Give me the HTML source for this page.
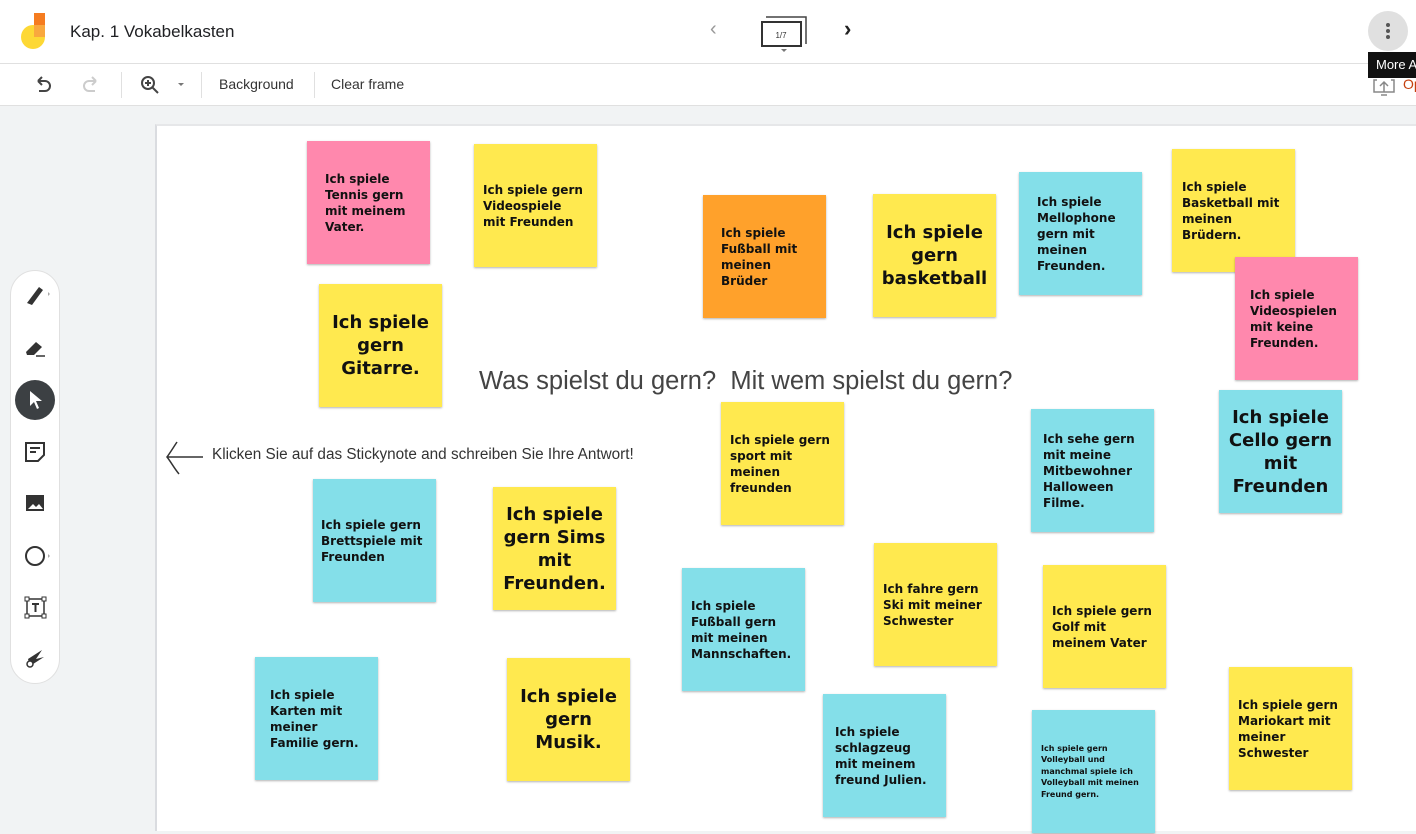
<!DOCTYPE html>
<html><head><meta charset="utf-8"><style>
*{margin:0;padding:0;box-sizing:border-box}
body{width:1416px;height:834px;overflow:hidden;background:#f1f3f4;font-family:"Liberation Sans",Arial,sans-serif;position:relative}
.hdr{position:absolute;left:0;top:0;width:1416px;height:64px;background:#fff;border-bottom:1px solid #e0e0e0}
.tb{position:absolute;left:0;top:64px;width:1416px;height:42px;background:#fff;border-bottom:1px solid #e0e0e0}
.canvas{position:absolute;left:155px;top:124px;width:1261px;height:707px;background:#fff;border-left:2px solid #dadce0;border-top:2px solid #e6e7e9}
.n{position:absolute;width:123px;height:123px;display:flex;align-items:center;padding:0 10px 0 18px;font-family:"DejaVu Sans",sans-serif;font-weight:bold;font-size:12px;line-height:16px;color:#111;box-shadow:0 1px 2px rgba(0,0,0,.3)}
.big{font-size:18px;line-height:23px;justify-content:center;text-align:center;padding:0 6px}
.p{background:#ff88ad}.y{background:#ffe94f}.o{background:#ffa12b}.c{background:#84dfe9}
.sep{position:absolute;top:72px;width:1px;height:26px;background:#e0e0e0}
.tool{position:absolute;left:10px;top:270px;width:50px;height:414px;background:#fff;border-radius:25px;border:1px solid #e0e0e0}
</style></head><body>
<div class="hdr">
 <svg style="position:absolute;left:20px;top:12px" width="28" height="38"><circle cx="13" cy="25" r="12" fill="#fdd835"/><rect x="14" y="1" width="11" height="12" fill="#f57c20"/><rect x="14" y="13" width="11" height="12" fill="#f9a83e"/></svg>
 <div style="position:absolute;left:70px;top:22px;font-size:17px;color:#202124">Kap. 1 Vokabelkasten</div>
 <div style="position:absolute;left:710px;top:18px;font-size:20px;color:#999">‹</div>
 <svg style="position:absolute;left:758px;top:14px" width="52" height="40"><path d="M8 3H48V30" fill="none" stroke="#444" stroke-width="1.5"/><rect x="4" y="8" width="39" height="24" fill="#fff" stroke="#333" stroke-width="2"/><text x="23" y="24" font-size="8" text-anchor="middle" font-family="Liberation Sans" fill="#333">1/7</text><path d="M23 35l3 3 3-3z" fill="#777"/></svg>
 <div style="position:absolute;left:844px;top:16px;font-size:22px;font-weight:bold;color:#222">›</div>
 <div style="position:absolute;left:1368px;top:11px;width:40px;height:40px;border-radius:50%;background:#e0e0e0"></div>
 <svg style="position:absolute;left:1384px;top:22px" width="8" height="18"><circle cx="4" cy="3" r="2" fill="#555"/><circle cx="4" cy="9" r="2" fill="#555"/><circle cx="4" cy="15" r="2" fill="#555"/></svg>
</div>
<div class="tb">
 <svg style="position:absolute;left:34px;top:12px" width="18" height="18"><path d="M4 5H11A5 5 0 0 1 11 15H5M4 5L8 1M4 5L8 9" fill="none" stroke="#444" stroke-width="2"/></svg>
 <svg style="position:absolute;left:82px;top:12px" width="18" height="18"><path d="M14 5H7A5 5 0 0 0 7 15H13M14 5L10 1M14 5L10 9" fill="none" stroke="#ccc" stroke-width="2"/></svg>
 <svg style="position:absolute;left:140px;top:11px" width="20" height="20"><circle cx="8" cy="8" r="6" fill="none" stroke="#444" stroke-width="2"/><path d="M12 12L18 18M5 8H11M8 5V11" stroke="#444" stroke-width="2"/></svg>
 <div style="position:absolute;left:178px;top:19px;border:3px solid transparent;border-top:3px solid #777"></div>
 <div style="position:absolute;left:219px;top:12px;font-size:14px;color:#333">Background</div>
 <div style="position:absolute;left:331px;top:12px;font-size:14px;color:#333">Clear frame</div>
 <svg style="position:absolute;left:1373px;top:12px" width="22" height="20"><path d="M4 4H1V16H21V4H18M11 16V6M7 10L11 6L15 10M8 19H14" fill="none" stroke="#888" stroke-width="1.5"/></svg>
 <div style="position:absolute;left:1403px;top:12px;font-size:14px;color:#c5400f">Op</div>
</div>
<div class="sep" style="left:121px"></div><div class="sep" style="left:201px"></div><div class="sep" style="left:314px"></div>
<div style="position:absolute;left:1368px;top:52px;width:48px;height:26px;background:#111;color:#fff;font-size:13px;padding:5px 0 0 8px;white-space:nowrap;overflow:hidden">More A</div>
<div class="canvas">
 <div style="position:absolute;left:322px;top:241px;font-size:25.5px;color:#444;white-space:pre;font-family:'Liberation Sans',sans-serif">Was spielst du gern?  Mit wem spielst du gern?</div>
 <svg style="position:absolute;left:6px;top:314px" width="42" height="36"><path d="M40 17H4M14 2C10 8 7 13 4 17C8 22 11 28 16 34" fill="none" stroke="#333" stroke-width="1.5"/></svg>
 <div style="position:absolute;left:55px;top:320px;font-size:15.3px;color:#333;white-space:nowrap">Klicken Sie auf das Stickynote and schreiben Sie Ihre Antwort!</div>
</div>
<div class="n p" style="left:307px;top:141px">Ich spiele Tennis gern mit meinem Vater.</div>
<div class="n y" style="left:474px;top:144px;padding-left:9px">Ich spiele gern Videospiele mit Freunden</div>
<div class="n o" style="left:703px;top:195px">Ich spiele Fußball mit meinen Brüder</div>
<div class="n y big" style="left:873px;top:194px">Ich spiele gern basketball</div>
<div class="n c" style="left:1019px;top:172px">Ich spiele Mellophone gern mit meinen Freunden.</div>
<div class="n y" style="left:1172px;top:149px;padding-left:10px">Ich spiele Basketball mit meinen Brüdern.</div>
<div class="n p" style="left:1235px;top:257px;padding-left:15px">Ich spiele Videospielen mit keine Freunden.</div>
<div class="n y big" style="left:319px;top:284px">Ich spiele gern Gitarre.</div>
<div class="n y" style="left:721px;top:402px;padding-left:9px">Ich spiele gern sport mit meinen freunden</div>
<div class="n c" style="left:1031px;top:409px;padding-left:12px">Ich sehe gern mit meine Mitbewohner Halloween Filme.</div>
<div class="n c big" style="left:1219px;top:390px">Ich spiele Cello gern mit Freunden</div>
<div class="n c" style="left:313px;top:479px;padding-left:8px">Ich spiele gern Brettspiele mit Freunden</div>
<div class="n y big" style="left:493px;top:487px">Ich spiele gern Sims mit Freunden.</div>
<div class="n c" style="left:682px;top:568px;padding-left:9px">Ich spiele Fußball gern mit meinen Mannschaften.</div>
<div class="n y" style="left:874px;top:543px;padding-left:9px">Ich fahre gern Ski mit meiner Schwester</div>
<div class="n y" style="left:1043px;top:565px;padding-left:9px">Ich spiele gern Golf mit meinem Vater</div>
<div class="n c" style="left:255px;top:657px;padding-left:15px">Ich spiele Karten mit meiner Familie gern.</div>
<div class="n y big" style="left:507px;top:658px">Ich spiele gern Musik.</div>
<div class="n c" style="left:823px;top:694px;padding-left:12px">Ich spiele schlagzeug mit meinem freund Julien.</div>
<div class="n c" style="left:1032px;top:710px;font-size:8px;line-height:11.5px;padding-left:9px;padding-right:4px">Ich spiele gern Volleyball und manchmal spiele ich Volleyball mit meinen Freund gern.</div>
<div class="n y" style="left:1229px;top:667px;padding-left:9px">Ich spiele gern Mariokart mit meiner Schwester</div>
<div class="tool">
 <svg style="position:absolute;left:13px;top:12px" width="28" height="24"><path d="M3 20L12 8L16 11L8 22Z M12 8L15 4L19 7L16 11" fill="#333"/><path d="M24 9l2 2-2 2z" fill="#aaa"/></svg>
 <svg style="position:absolute;left:13px;top:66px" width="24" height="22"><path d="M2 15L12 5L18 10L10 18H3Z" fill="#333"/><path d="M12 19H21" stroke="#333" stroke-width="1.5"/></svg>
 <div style="position:absolute;left:4px;top:109px;width:40px;height:40px;border-radius:50%;background:#3c4043"></div>
 <svg style="position:absolute;left:17px;top:118px" width="16" height="22"><path d="M2 2V17L6 13L9 20L11 19L8 12H14Z" fill="#fff"/></svg>
 <svg style="position:absolute;left:13px;top:170px" width="22" height="22"><path d="M2 2H20V14L14 20H2Z M6 7H16M6 11H12" fill="none" stroke="#333" stroke-width="2"/></svg>
 <svg style="position:absolute;left:13px;top:222px" width="22" height="20"><rect x="2" y="2" width="18" height="16" fill="#333"/><path d="M4 16L9 11L12 14L15 11L19 16Z" fill="#fff"/></svg>
 <svg style="position:absolute;left:13px;top:273px" width="28" height="24"><circle cx="11" cy="12" r="9" fill="none" stroke="#333" stroke-width="2"/><path d="M24 10l2 2-2 2z" fill="#aaa"/></svg>
 <svg style="position:absolute;left:13px;top:325px" width="24" height="24"><rect x="3" y="3" width="17" height="17" fill="none" stroke="#333" stroke-width="1.5"/><rect x="1" y="1" width="4" height="4" fill="#fff" stroke="#333"/><rect x="18" y="1" width="4" height="4" fill="#fff" stroke="#333"/><rect x="1" y="18" width="4" height="4" fill="#fff" stroke="#333"/><rect x="18" y="18" width="4" height="4" fill="#fff" stroke="#333"/><path d="M8 8H15M11.5 8V16" stroke="#333" stroke-width="2"/></svg>
 <svg style="position:absolute;left:13px;top:376px" width="22" height="22"><path d="M4 12L18 3L12 12L20 10L6 19Z" fill="#333"/><circle cx="6" cy="17" r="3" fill="#fff" stroke="#333" stroke-width="1.5"/></svg>
</div>
</body></html>
